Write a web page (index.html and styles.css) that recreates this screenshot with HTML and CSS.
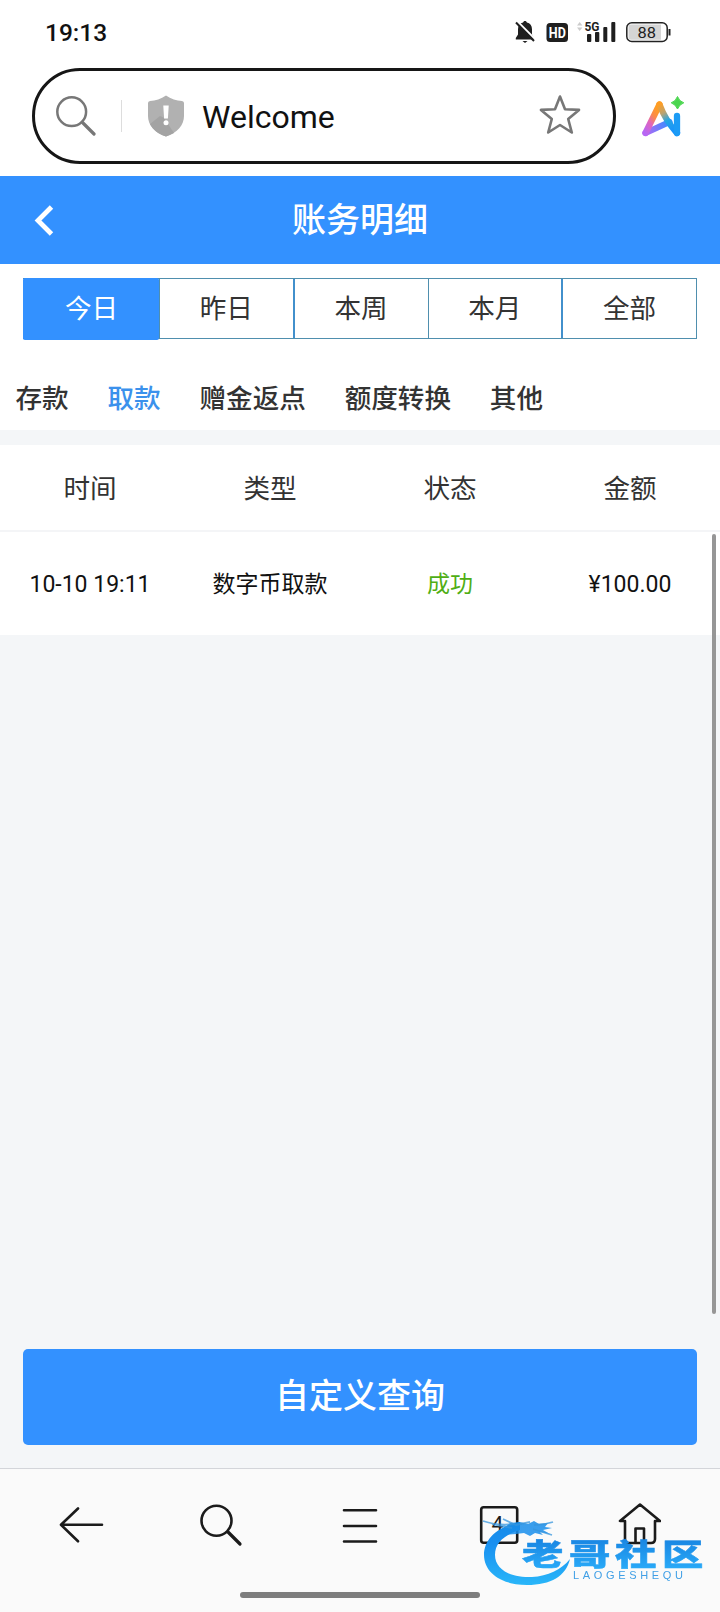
FILE: index.html
```html
<!DOCTYPE html>
<html lang="zh-CN">
<head>
<meta charset="utf-8">
<title>账务明细</title>
<link rel="stylesheet" href="styles.css">
</head>
<body>
<div class="screen">
  <div class="status">
    <span class="time">19:13</span>
    <svg class="status-icons" width="160" height="28" viewBox="512 18 160 28">
      <path fill="#1f1f1f" d="M525 21c1 0 1.700.6 1.900 1.600 3.200.7 5.100 3.200 5.100 6.600v5.300l2.200 3.500v1.500h-18.400v-1.500l2.200-3.500v-5.300c0-3.400 1.900-5.900 5.100-6.600.2-1 .9-1.600 1.900-1.600zM522.500 41h5l-2.500 2z"/>
      <path stroke="#fff" stroke-width="2" d="M517.500 21.500l18 18"/>
      <path stroke="#1f1f1f" stroke-width="2" d="M516 22.500l18 18.500"/>
      <rect x="546.500" y="23" width="21.500" height="19" rx="3.500" fill="#1f1f1f"/>
      <text class="hd" x="548.800" y="38" textLength="17" lengthAdjust="spacingAndGlyphs">HD</text>
      <path fill="#ccc" d="M577 25.500l2.700-3.500 2.700 3.500zM577 27.500l2.700 3.500 2.700-3.500z"/>
      <text class="net" x="584.500" y="31" textLength="15" lengthAdjust="spacingAndGlyphs">5G</text>
      <g fill="#1f1f1f"><rect x="587" y="34" width="4.300" height="8" rx="1"/><rect x="595" y="32" width="4.300" height="10" rx="1"/><rect x="603.300" y="27" width="4" height="15" rx="1"/><rect x="611.300" y="22" width="4" height="20" rx="1"/></g>
      <rect x="626.800" y="22.800" width="40.400" height="18.600" rx="5" fill="#fff" stroke="#222" stroke-width="1.500"/>
      <path fill="#d5d5d5" d="M631 24.500h30v15.300h-30q-2.500 0-2.500-2.500v-10.300q0-2.500 2.500-2.500z"/>
      <path stroke="#222" stroke-width="2" d="M669.500 29v6.500"/>
      <text class="pct" x="637.500" y="37.500" textLength="18.500" lengthAdjust="spacingAndGlyphs">88</text>
    </svg>
  </div>

  <div class="browser">
    <div class="address">
      <svg width="40" height="42" viewBox="56 95 40 42" fill="none" stroke="#777"><circle cx="71.700" cy="111.700" r="14.400" stroke-width="2.500"/><path stroke-width="3.200" stroke-linecap="round" d="M82.500 122.500l11.500 11.500"/></svg>
      <i class="divider"></i>
      <svg class="shield" width="36" height="42" viewBox="148 95 36 42"><path fill="#b1b1b1" d="M166 95.500c5 3.700 10.500 5 16 5.500q2 .3 2 2v13c0 9-6.500 17-18 20.500-11.500-3.500-18-11.500-18-20.500v-13q0-1.700 2-2c5.500-.5 11-1.800 16-5.500z"/><path fill="#a3a3a3" d="M150 124l10-8q4 1 6 5l8 12-8 3.500c-8-2.500-13-7-16-12.500z"/><path fill="#fff" d="M163.300 105.500h5.400l-.8 13h-3.800z"/><circle cx="166" cy="122.700" r="2.500" fill="#fff"/></svg>
      <span class="site">Welcome</span>
      <svg width="42" height="42" viewBox="539 94 42 42"><path fill="none" stroke="#777" stroke-width="2.600" stroke-linejoin="round" d="M560 95.500l5 12.800 14 .6-10.800 9.100 3.600 13.500-11.800-7.500-11.800 7.500 3.600-13.500-10.800-9.100 14-.6z"/></svg>
    </div>
    <svg class="ai" width="46" height="44" viewBox="640 94 46 44">
      <defs>
        <linearGradient id="aiLeg" x1="0" y1="1" x2=".6" y2="0"><stop offset="0" stop-color="#b766f4"/><stop offset=".4" stop-color="#e065bd"/><stop offset=".7" stop-color="#fb8a4b"/><stop offset="1" stop-color="#ff9d23"/></linearGradient>
        <linearGradient id="aiDown" gradientUnits="userSpaceOnUse" x1="660" y1="104" x2="676" y2="132"><stop offset="0" stop-color="#ff9d23"/><stop offset=".3" stop-color="#b9a373"/><stop offset=".55" stop-color="#25a6e4"/><stop offset="1" stop-color="#168eff"/></linearGradient>
        <linearGradient id="aiBase" gradientUnits="userSpaceOnUse" x1="645" y1="133" x2="668" y2="124"><stop offset="0" stop-color="#b766f4"/><stop offset="1" stop-color="#3c8cff"/></linearGradient>
      </defs>
      <g fill="none" stroke-width="6.300" stroke-linecap="round" stroke-linejoin="round">
        <path stroke="url(#aiBase)" d="M645.500 133l24-11"/>
        <path stroke="url(#aiLeg)" d="M645.500 133l14-28.500"/>
        <path stroke="url(#aiDown)" d="M659.500 104.500q6 16 17.500 28.500"/>
        <path stroke="#1c9bf5" d="M677 116v17"/>
      </g>
      <path fill="#4bd64f" stroke="#4bd64f" stroke-linejoin="round" d="M677.500 96.500q1.700 5 6.300 6.300-4.600 1.700-6.300 6.200-1.700-4.500-6.300-6.200 4.600-1.300 6.300-6.300z"/>
    </svg>
  </div>

  <header class="header">
    <svg width="20" height="32" viewBox="0 0 20 32"><path fill="none" stroke="#fff" stroke-width="4.800" d="M17.500 3L4 16.500 17.500 30"/></svg>
    <h1>账务明细</h1>
  </header>

  <div class="filters">
    <div class="periods"><span class="period active">今日</span><span class="period">昨日</span><span class="period thick">本周</span><span class="period">本月</span><span class="period thick">全部</span></div>
    <div class="kinds"><span>存款</span><span class="current">取款</span><span>赠金返点</span><span>额度转换</span><span>其他</span></div>
  </div>

  <div class="row head"><span>时间</span><span>类型</span><span>状态</span><span>金额</span></div>
  <div class="row"><span class="num">10-10 19:11</span><span>数字币取款</span><span class="ok">成功</span><span class="num">¥100.00</span></div>

  <div class="query"><div class="button">自定义查询</div></div>

  <nav class="nav">
    <div class="tools">
      <svg width="46" height="48" viewBox="60 1501 46 48"><path d="M103 1524.800H62.500M79 1508.500l-17 16.300 17 16.500"/></svg>
      <svg width="46" height="48" viewBox="199 1501 46 48"><circle cx="217.500" cy="1520.700" r="15"/><path stroke-width="3.200" d="M229 1532l12 12"/></svg>
      <svg width="46" height="48" viewBox="337 1501 46 48"><path d="M344 1510.300h32M344 1526h32M344 1541.500h32"/></svg>
      <svg width="46" height="48" viewBox="476 1501 46 48"><rect x="481.200" y="1507.200" width="36" height="35.500" rx="2.500"/><text class="count" x="491.500" y="1531">4</text></svg>
      <svg width="46" height="48" viewBox="615 1501 46 48"><path d="M620 1521h5v18q0 4 4 4h22q4 0 4-4v-18h5l-20-16.500zM635.500 1543v-14.500h8.500v14.500"/></svg>
    </div>
    <div class="pill"></div>
  </nav>
  <i class="scrollbar"></i>

  <svg class="watermark" width="230" height="90" viewBox="480 1505 230 90">
    <defs>
      <linearGradient id="wm" gradientUnits="userSpaceOnUse" x1="0" y1="1515" x2="0" y2="1585"><stop offset="0" stop-color="#168be5"/><stop offset=".4" stop-color="#198ff0"/><stop offset="1" stop-color="#29b6f9"/></linearGradient>
      <linearGradient id="wmText" x1="0" y1="0" x2="0" y2="1"><stop offset=".2" stop-color="#1985e2"/><stop offset=".9" stop-color="#29aaf8"/></linearGradient>
    </defs>
    <g fill="url(#wm)">
      <path d="M520 1522c-22 4-36 17-36 33 0 18 18 30 43 30 24 0 39-9 43-26-9 11-22 17-38 18-22 1-37-8-37-22 0-12 9-20 25-25z"/>
      <path opacity=".85" d="M510 1523l10-1 8 2 6-3 5 3 9-1-3 4 7 1-9 2 7 4-10-2 3 3-8-2-5 3-6-3-8 1-12 1 5-4-7-1z"/>
    </g>
    <path fill="none" stroke="#3796dd" stroke-width="1.800" opacity=".75" d="M483 1521q15 5 31 3M492 1524l20 4M503 1519l13 6 14-3M534 1525q10 0 19-3M533 1529q9 3 19 6"/>
    <g class="brand" fill="url(#wmText)" stroke="url(#wmText)">
      <text transform="translate(522 1565) scale(1.380 1)">老</text><text transform="translate(569 1565) scale(1.380 1)">哥</text><text transform="translate(615 1565) scale(1.380 1)">社</text><text transform="translate(662 1565) scale(1.380 1)">区</text>
    </g>
    <text class="latin" x="573" y="1578.500" textLength="110">LAOGESHEQU</text>
  </svg>
</div>
</body>
</html>
```
FILE: styles.css
```css
* { box-sizing: border-box; }
body { margin: 0; font-family: Roboto, "Noto Sans CJK SC", sans-serif; color: #333; }
svg { display: block; flex: none; }
.screen { position: relative; display: flex; flex-direction: column; width: 720px; height: 1612px; overflow: hidden; background: #f4f6f8; }
.status { display: flex; justify-content: space-between; align-items: flex-start; height: 68px; padding: 18px 48px 0 45px; background: #fff; }
.time { font-size: 24.500px; font-weight: 500; line-height: 30px; color: #111; }
.hd { font: 700 15px Roboto, sans-serif; fill: #fff; }
.net { font: 700 12px Roboto, sans-serif; fill: #1f1f1f; }
.pct { font: 400 15.500px Roboto, sans-serif; fill: #222; }
.browser { display: flex; height: 108px; padding-left: 32px; background: #fff; }
.address { display: flex; align-items: center; width: 584px; height: 96px; padding: 0 32px 0 21px; border: 3px solid #161616; border-radius: 48px; }
.divider { width: 1px; height: 32px; margin-left: 25px; background: #ddd; }
.shield { margin-left: 26px; }
.site { flex: 1; padding: 2px 0 0 18px; font-size: 32px; line-height: 40px; color: #111; }
.ai { margin: 26px 0 0 24px; }
.header { display: grid; grid-template-columns: 20px 1fr 20px; align-items: center; height: 88px; padding: 0 34px; background: #3391ff; color: #fff; }
.header h1 { margin: 0; font-size: 34px; font-weight: 500; line-height: 50px; text-align: center; }
.filters { height: 181px; padding-top: 14px; background: #fff; border-bottom: 15px solid #f4f6f8; }
.periods { display: flex; height: 61px; margin: 0 23px; border: 1px solid #4f8fae; border-left: 0; }
.period { flex: 1; border-left: 1px solid #4f8fae; font-size: 26.600px; line-height: 60px; text-align: center; }
.period.thick { border-left: 2px solid #4290cc; }
.period.active { flex: 0 0 136px; height: 62px; margin-top: -1px; border-color: #3391ff; border-radius: 2px; background: #3391ff; color: #fff; line-height: 62px; }
.kinds { display: flex; gap: 38.800px; padding: 40px 0 0 15.500px; font-size: 26.600px; font-weight: 500; line-height: 40px; }
.current { color: #3b91ec; }
.row { display: grid; grid-template-columns: repeat(4, 1fr); align-items: center; height: 103px; padding-bottom: 3px; background: #fff; color: #111; font-size: 23px; text-align: center; }
.num { padding-top: 4px; }
.head { height: 87px; border-bottom: 2px solid #f4f5f7; color: #333; font-size: 26.600px; }
.ok { color: #4fae14; }
.query { margin-top: auto; padding: 0 23px 23px; }
.button { height: 96px; border-radius: 5px; background: #3391ff; color: #fff; font-size: 34px; font-weight: 500; line-height: 95px; text-align: center; }
.nav { height: 144px; padding: 32px 12px 0; border-top: 1px solid #d3d5da; background: #fafafa; }
.tools { display: grid; grid-template-columns: repeat(5, 1fr); justify-items: center; }
.tools svg { fill: none; stroke: #1b1b1b; stroke-width: 2.600px; stroke-linecap: round; stroke-linejoin: round; }
.tools .count { font: 400 21px Roboto, sans-serif; fill: #1b1b1b; stroke: none; }
.pill { width: 240px; height: 6px; margin: 43px auto 0; border-radius: 3px; background: #7d7d7d; }
.scrollbar { position: absolute; top: 534px; right: 4px; width: 4px; height: 780px; border-radius: 2px; background: #969696; }
.watermark { position: absolute; left: 480px; top: 1505px; filter: blur(.5px); }
.brand { font: 900 30px "Noto Sans CJK SC", sans-serif; stroke-width: .5px; }
.latin { font: 400 11px "Liberation Sans", sans-serif; fill: #3f9fe6; }
```
